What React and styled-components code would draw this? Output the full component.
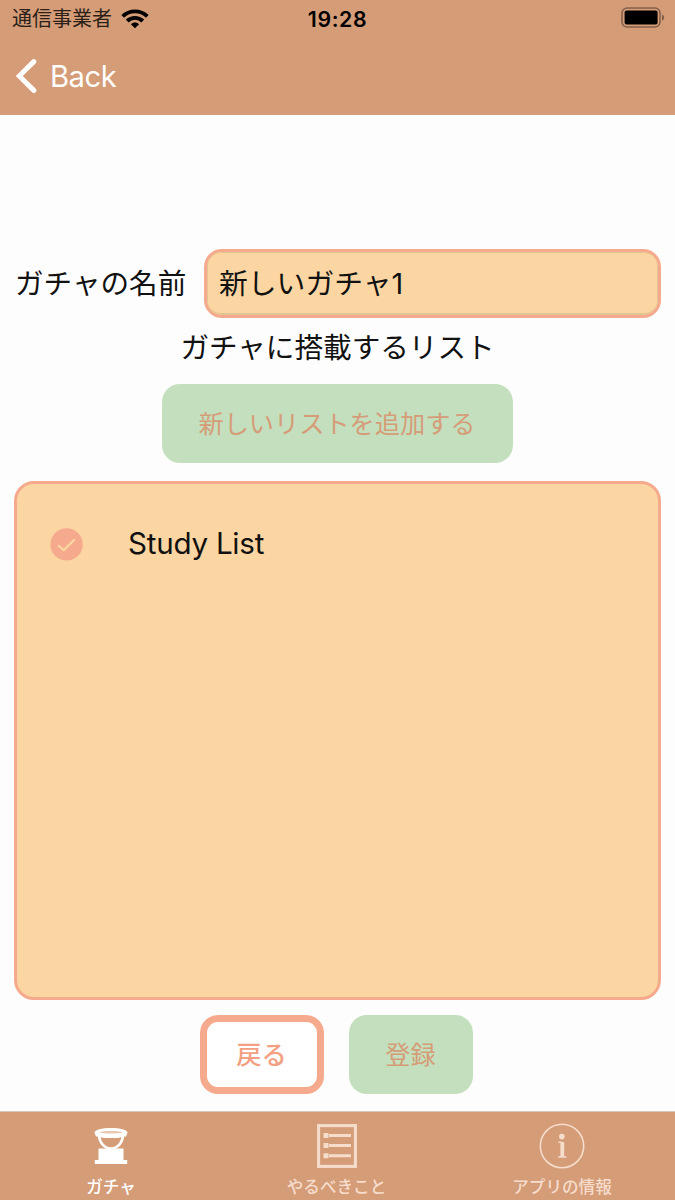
import React, { useState } from "react";
import styled, { createGlobalStyle } from "styled-components";

const lists = [{ id: 1, title: "Study List" }];

const tabs = [
  { id: "gacha", label: "ガチャ" },
  { id: "todo", label: "やるべきこと" },
  { id: "info", label: "アプリの情報" },
];

const WifiIcon = () => (
  <svg width="28" height="20" viewBox="0 0 28 20" fill="none" stroke="#000" strokeWidth="3.9">
    <path d="M1.7 7.3C8.5 0.7 19.5 0.7 26.3 7.3" />
    <path d="M6.2 12C10.6 7.8 17.4 7.8 21.8 12" />
    <path d="M14 19.3L9.9 15.2C12.2 13 15.8 13 18.1 15.2Z" fill="#000" stroke="none" />
  </svg>
);

const BatteryIcon = () => (
  <svg width="44" height="22" viewBox="0 0 44 22">
    <rect x="1" y="1" width="38" height="19" rx="5" fill="none" stroke="#000" strokeOpacity="0.38" strokeWidth="1.6" />
    <rect x="3.6" y="3.6" width="33" height="14" rx="2" fill="#000" />
    <path d="M41 7.6C43.9 8.6 43.9 12.8 41 13.8Z" fill="#000" fillOpacity="0.38" />
  </svg>
);

const ChevronIcon = () => (
  <svg width="22" height="36" viewBox="0 0 22 36" fill="none" stroke="#fff" strokeWidth="5">
    <path d="M17.8 3.6L3.2 18L17.8 32.4" strokeLinecap="round" strokeLinejoin="miter" />
  </svg>
);

const CheckIcon = () => (
  <svg width="34" height="34" viewBox="0 0 34 34" fill="none">
    <circle cx="16.6" cy="17.4" r="16.2" fill="#f6aa8d" />
    <path d="M8.2 18.2L13.8 23.2L24.8 12.2" stroke="#fbd6a2" strokeWidth="2.2" />
  </svg>
);

const GachaIcon = () => (
  <svg width="34" height="38" viewBox="0 0 34 38" fill="#fff">
    <path d="M0.5 5.8C0.5 3 8 1 17 1S33.5 3 33.5 5.8L32 9.5H2Z" />
    <path d="M5 5.4C10 3.6 24 3.6 29 5.4C24 6.8 10 6.8 5 5.4Z" fill="#e8c8b2" />
    <path d="M4.5 21.5H29.5V33H33.2V37H0.8V33H4.5Z" />
    <path d="M3.6 8C4 15.6 9 22.6 17 22.6S30 15.6 30.4 8Z" />
    <path d="M6.6 10.2C12 11.4 22 11.4 27.4 10.2C26.4 15.6 22.4 20.2 17 20.2S7.6 15.6 6.6 10.2Z" fill="#d59c78" />
  </svg>
);

const TodoIcon = () => (
  <svg width="40" height="44" viewBox="0 0 40 44" fill="none" stroke="#f5dccb">
    <rect x="1.6" y="1.6" width="36.8" height="40.8" strokeWidth="3.1" />
    <path d="M12 11.4H34M12 21.6H34M12 31.8H34" strokeWidth="3" />
    <path d="M6.5 11.4H11.5M6.5 21.6H11.5M6.5 31.8H11.5" strokeWidth="5" />
  </svg>
);

const InfoIcon = () => (
  <svg width="46" height="46" viewBox="0 0 46 46" fill="none" stroke="#f5dccb">
    <circle cx="23" cy="23" r="21.7" strokeWidth="1.6" />
    <circle cx="22.8" cy="13.6" r="2.8" fill="#f5dccb" stroke="none" />
    <path d="M23.3 19V34" strokeWidth="3.8" />
    <path d="M19.4 19.3H23M19 34.1H27.4" strokeWidth="1.5" />
  </svg>
);

const icons = {
  gacha: <GachaIcon />,
  todo: <TodoIcon />,
  info: <InfoIcon />,
};

const App = () => {
  const [name, setName] = useState("新しいガチャ1");
  const [activeTab, setActiveTab] = useState("gacha");

  return (
    <Screen>
      <GlobalStyle />
      <Header>
        <StatusBar>
          <Carrier>
            通信事業者
            <WifiIcon />
          </Carrier>
          <Clock>19:28</Clock>
          <Battery>
            <BatteryIcon />
          </Battery>
        </StatusBar>
        <BackButton>
          <ChevronIcon />
          Back
        </BackButton>
      </Header>
      <Content>
        <NameRow>
          <Label htmlFor="gacha-name">ガチャの名前</Label>
          <NameField>
            <NameInput
              id="gacha-name"
              value={name}
              onChange={(e) => setName(e.target.value)}
            />
          </NameField>
        </NameRow>
        <Heading>ガチャに搭載するリスト</Heading>
        <Button $width={351}>新しいリストを追加する</Button>
        <ListBox>
          {lists.map((list) => (
            <ListItem key={list.id}>
              <CheckIcon />
              <ListTitle>{list.title}</ListTitle>
            </ListItem>
          ))}
        </ListBox>
        <Actions>
          <Button $width={124} $outlined>
            戻る
          </Button>
          <Button $width={124}>登録</Button>
        </Actions>
      </Content>
      <TabBar>
        {tabs.map((tab) => (
          <Tab
            key={tab.id}
            $active={tab.id === activeTab}
            onClick={() => setActiveTab(tab.id)}
          >
            <TabIcon>{icons[tab.id]}</TabIcon>
            <TabLabel>{tab.label}</TabLabel>
          </Tab>
        ))}
      </TabBar>
    </Screen>
  );
};

const GlobalStyle = createGlobalStyle`
  * {
    box-sizing: border-box;
  }

  body {
    margin: 0;
  }

  body, button, input {
    font-family: Inter, "Noto Sans CJK JP", sans-serif;
  }

  button {
    border: none;
    background: none;
    padding: 0;
  }

  svg {
    display: block;
    flex-shrink: 0;
  }
`;

const Screen = styled.div`
  width: 675px;
  height: 1200px;
  display: flex;
  flex-direction: column;
  background: #fdfdfd;
  color: #111;
  overflow: hidden;
`;

const Header = styled.header`
  height: 115px;
  background: #d59c78;
`;

const StatusBar = styled.div`
  height: 36px;
  padding: 0 10px 0 12px;
  display: grid;
  grid-template-columns: 1fr auto 1fr;
  align-items: center;
`;

const Carrier = styled.div`
  display: flex;
  align-items: center;
  gap: 9px;
  font-size: 20px;
  line-height: 38px;
  color: #2b1f18;
`;

const Clock = styled.div`
  margin-left: -2px;
  font-size: 21.3px;
  font-weight: 600;
  line-height: 36px;
  letter-spacing: 0.6px;
  color: #000;
`;

const Battery = styled.div`
  display: flex;
  justify-content: flex-end;
  padding-bottom: 2px;
`;

const BackButton = styled.button`
  display: flex;
  align-items: center;
  gap: 12px;
  height: 79px;
  padding: 1px 0 0 16px;
  color: #fff;
  font-size: 29.2px;
  letter-spacing: -0.5px;
`;

const Content = styled.main`
  height: 996px;
  padding: 134px 14px 0;
  display: flex;
  flex-direction: column;
  align-items: center;
`;

const NameRow = styled.div`
  width: 100%;
  display: flex;
  align-items: center;
  justify-content: space-between;
`;

const Label = styled.label`
  padding: 1px 0 0 1px;
  font-size: 28.6px;
  line-height: 40px;
  white-space: nowrap;
`;

const NameField = styled.div`
  width: 457px;
  height: 69px;
  border: 3px solid #f6aa8d;
  border-radius: 18px;
  background: #fbd6a2;
  overflow: hidden;
`;

const NameInput = styled.input`
  width: 100%;
  height: 100%;
  padding: 0 11px 3px;
  border: 1px solid #e4c591;
  border-bottom-width: 2px;
  border-radius: 14px;
  outline: none;
  background: transparent;
  color: #111;
  font-size: 28.8px;
`;

const Heading = styled.h2`
  margin: 9px 0 16px;
  font-size: 28.6px;
  font-weight: 400;
  line-height: 41px;
`;

const Button = styled.button`
  width: ${(props) => props.$width}px;
  height: 79px;
  flex-shrink: 0;
  border: ${(props) => (props.$outlined ? "7px solid #f6aa8d" : "none")};
  border-radius: 18px;
  background: ${(props) => (props.$outlined ? "#fff" : "#c4dfbd")};
  color: ${(props) => (props.$outlined ? "#f3a082" : "#d59c78")};
  font-size: 25.2px;
  font-weight: ${(props) => (props.$outlined ? 500 : 400)};
  line-height: 36px;
  text-indent: -1px;
`;

const ListBox = styled.ul`
  width: 647px;
  height: 519px;
  margin: 18px 0 15px;
  padding: 43px 33px 0;
  border: 3px solid #f6aa8d;
  border-radius: 20px;
  background: #fbd6a2;
  list-style: none;
`;

const ListItem = styled.li`
  display: flex;
  align-items: center;
  gap: 44px;
  height: 34px;
`;

const ListTitle = styled.span`
  padding-bottom: 3px;
  color: #111;
  font-size: 29.6px;
  letter-spacing: -0.25px;
`;

const Actions = styled.div`
  display: flex;
  gap: 25px;
  padding-right: 2px;
`;

const TabBar = styled.nav`
  height: 89px;
  display: flex;
  justify-content: space-between;
  padding-right: 2px;
  border-top: 1px solid #d3c8c1;
  background: #d59c78;
`;

const Tab = styled.button`
  width: 222px;
  display: flex;
  flex-direction: column;
  align-items: center;
  color: ${(props) => (props.$active ? "#fff" : "#f5dccb")};
`;

const TabIcon = styled.span`
  height: 61px;
  padding-top: 6px;
  display: flex;
  align-items: center;
`;

const TabLabel = styled.span`
  padding-top: 1px;
  font-size: 16.6px;
  font-weight: 500;
  line-height: 26px;
`;

export default App;
